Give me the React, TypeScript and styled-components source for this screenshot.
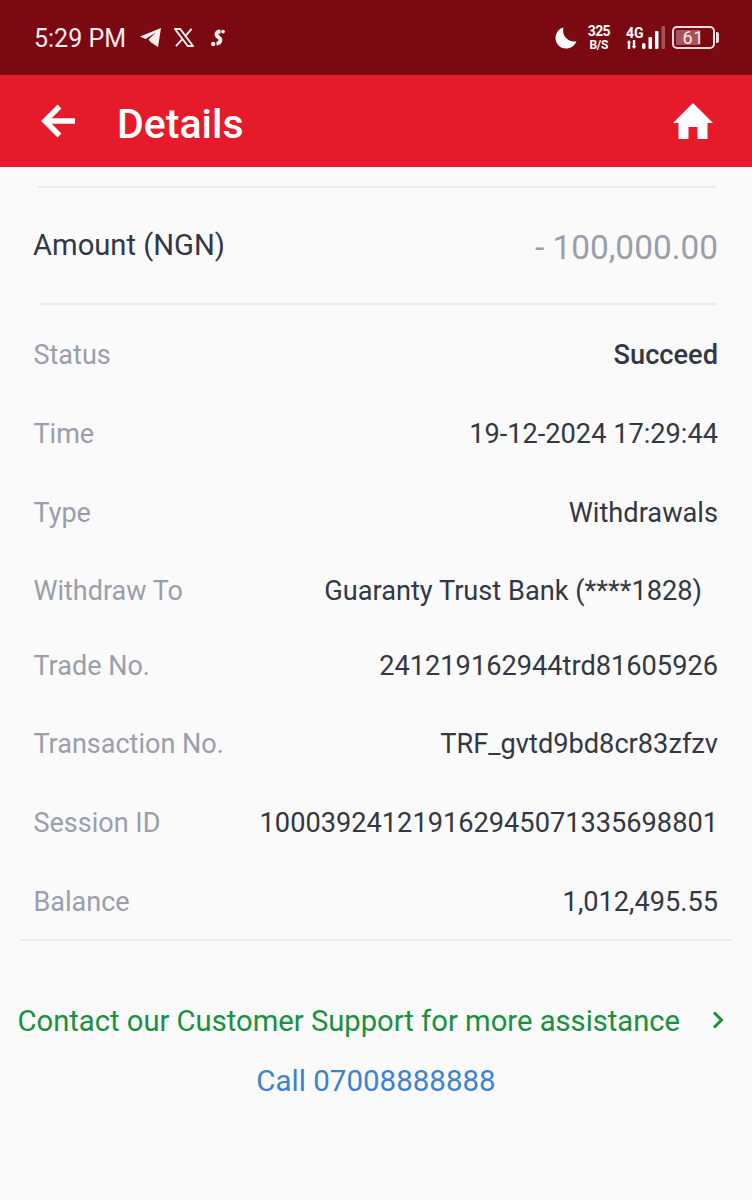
import React from "react";
import styled, { createGlobalStyle } from "styled-components";

const GlobalStyle = createGlobalStyle`
  html, body {
    margin: 0;
    padding: 0;
    background: #fafafb;
    font-family: Roboto, "Liberation Sans", sans-serif;
  }
`;

const Page = styled.div`
  width: 752px;
  height: 1200px;
  overflow: hidden;
  background: #fafafb;
  display: flex;
  flex-direction: column;
`;

const StatusBar = styled.div`
  height: 75px;
  background: #7a0911;
  color: #f7eeee;
  display: flex;
  align-items: center;
  justify-content: space-between;
  padding: 0 33px 0 34px;
  box-sizing: border-box;
`;

const StatusGroup = styled.div`
  display: flex;
  align-items: center;
`;

const Clock = styled.span`
  font-size: 25px;
  margin: 2px 14px 0 0;
`;

const Speed = styled.div`
  display: flex;
  flex-direction: column;
  align-items: center;
  font-size: 14px;
  font-weight: 700;
  line-height: 14px;
  letter-spacing: -0.6px;
  margin: 0 16px 0 11px;
  color: #fff;
`;

const SpeedUnit = styled.span`
  font-size: 12px;
  font-weight: 700;
  letter-spacing: -0.2px;
`;

const Network = styled.div`
  display: flex;
  flex-direction: column;
  width: 16px;
  font-size: 14px;
  font-weight: 700;
  line-height: 14px;
  color: #fff;
`;

const Battery = styled.div`
  position: relative;
  width: 43px;
  height: 23px;
  margin-left: 7px;
  box-sizing: border-box;
  border: 2px solid #f0dcdc;
  border-radius: 5px;
  display: flex;
  align-items: center;
  justify-content: center;
  color: #f7eeee;
  font-size: 18px;
  padding: 2px;
`;

const BatteryFill = styled.div`
  position: absolute;
  left: 2px;
  top: 2px;
  bottom: 2px;
  background: #a8525a;
  border-radius: 1px;
`;

const BatteryLevel = styled.span`
  position: relative;
  letter-spacing: 1px;
`;

const BatteryCap = styled.div`
  width: 3px;
  height: 11px;
  margin-left: 1px;
  background: #f0dcdc;
  border-radius: 0 2px 2px 0;
`;

const Header = styled.header`
  height: 92px;
  background: #e51a2a;
  color: #fff;
  display: flex;
  align-items: center;
  padding: 0 39px 0 41px;
  box-sizing: border-box;
`;

const Title = styled.h1`
  margin: 5px auto 0 40px;
  font-size: 41px;
  font-weight: 500;
`;

const Divider = styled.div<{ $left: number; $right: number }>`
  height: 2px;
  margin: 0 ${(p) => p.$right}px 0 ${(p) => p.$left}px;
  background: #e9e9f2;
`;

const Body = styled.main`
  padding-top: 19px;
`;

const AmountRow = styled.div`
  height: 115px;
  display: flex;
  align-items: center;
  justify-content: space-between;
  padding: 0 34px;
`;

const AmountLabel = styled.span`
  font-size: 29.2px;
  color: #333743;
  margin: 0 0 2px -1px;
`;

const AmountValue = styled.span`
  font-size: 33.4px;
  color: #9a9eab;
  margin-top: 4px;
`;

const Rows = styled.div`
  padding: 34px 34px 0 33.5px;
  height: 634px;
  box-sizing: border-box;
`;

const Row = styled.div<{ $height: number }>`
  height: ${(p) => p.$height}px;
  display: flex;
  align-items: flex-start;
  justify-content: space-between;
  line-height: 32px;
`;

const Label = styled.span`
  color: #9a9eab;
  font-size: 27px;
`;

const Value = styled.span<{ $bold?: boolean; $shift?: number }>`
  color: #333743;
  font-size: 27.2px;
  font-weight: ${(p) => (p.$bold ? 500 : 400)};
  margin-right: ${(p) => p.$shift ?? 0}px;
`;

const Support = styled.div`
  display: flex;
  align-items: center;
  justify-content: space-between;
  padding: 63px 28px 0 17.5px;
  color: #17903f;
  font-size: 29.2px;
`;

const CallLink = styled.div`
  margin-top: 26px;
  text-align: center;
  color: #3b82d0;
  font-size: 29.5px;
`;

type RowData = { label: string; value: string; height: number; bold?: boolean; shift?: number };

const rows: RowData[] = [
  { label: "Status", value: "Succeed", height: 79, bold: true },
  { label: "Time", value: "19-12-2024 17:29:44", height: 79 },
  { label: "Type", value: "Withdrawals", height: 78 },
  { label: "Withdraw To", value: "Guaranty Trust Bank (****1828)", height: 75, shift: 16 },
  { label: "Trade No.", value: "241219162944trd81605926", height: 78 },
  { label: "Transaction No.", value: "TRF_gvtd9bd8cr83zfzv", height: 79 },
  { label: "Session ID", value: "100039241219162945071335698801", height: 79 },
  { label: "Balance", value: "1,012,495.55", height: 40 },
];

const TelegramIcon = () => (
  <svg width="21" height="19" viewBox="0 0 21 19" fill="currentColor">
    <path d="M0 8.5 L21 0 L18 19 L11 14.5 L8.5 11.5 L16 4.5 L5.5 11 Z" />
  </svg>
);

const XIcon = () => (
  <svg width="20" height="19" viewBox="0 0 21 20" style={{ marginLeft: 13 }}>
    <path d="M1 1 H6.5 L20 19 H14.5 Z" fill="none" stroke="currentColor" strokeWidth="2" />
    <path d="M18.5 1 L11.5 9 M9 11.5 L2 19" stroke="currentColor" strokeWidth="2" />
  </svg>
);

const SIcon = () => (
  <svg width="14" height="18" viewBox="0 0 14 18" style={{ marginLeft: 17 }}>
    <path d="M9.5 2.5 C6.5 2.5 5 4 5.5 6 C6 8 9.5 8.5 9.5 11 C9.5 13 8 14.5 5.5 14.5" fill="none" stroke="currentColor" strokeWidth="3.8" />
    <circle cx="12" cy="2.6" r="1.9" fill="currentColor" />
    <circle cx="2.2" cy="15" r="2.2" fill="currentColor" />
  </svg>
);

const MoonIcon = () => (
  <svg width="22" height="22" viewBox="0 0 22 22" fill="#fff">
    <path d="M8.5 0.5 C6.5 7.5 11.5 15.5 21.5 14.5 C19.5 19 15.5 21.5 11 21.5 C5 21.5 0.5 16.5 0.5 11 C0.5 6 4 1.5 8.5 0.5 Z" />
  </svg>
);

const Signal = () => (
  <svg width="23" height="23" viewBox="0 0 23 23">
    <rect x="0" y="17" width="3.5" height="6" rx="1.5" fill="#fff" />
    <rect x="6.5" y="11" width="3.5" height="12" rx="1" fill="#fff" />
    <rect x="13" y="5" width="3.5" height="18" rx="1" fill="#fff" />
    <rect x="19.5" y="0" width="3.5" height="23" rx="1" fill="#a65058" />
  </svg>
);

const Arrows = () => (
  <svg width="11" height="9" viewBox="0 0 11 9" fill="#fff">
    <path d="M3 0 L5.2 3 H4.2 V9 H1.8 V3 H0.8 Z" />
    <path d="M8 9 L10.4 6 H9.2 V0 H6.8 V6 H5.6 Z" />
  </svg>
);

const BackArrow = () => (
  <svg width="36" height="34" viewBox="0 0 36 34" fill="none" stroke="#fff" strokeWidth="5.5">
    <path d="M34 17 H5" />
    <path d="M18.5 2.5 L4 17 L18.5 31.5" />
  </svg>
);

const HomeIcon = () => (
  <svg width="40" height="36" viewBox="0 0 40 36" fill="#fff">
    <path d="M20 0 L40 20 H34.5 V36 H24.5 V24 H15.5 V36 H5.5 V20 H0 Z" />
  </svg>
);

const Chevron = () => (
  <svg width="13" height="20" viewBox="0 0 13 20" fill="none" stroke="#17903f" strokeWidth="3" style={{ marginBottom: 3 }}>
    <path d="M3 2.5 L10.5 10 L3 17.5" />
  </svg>
);

const App = () => {
  return (
    <Page>
      <GlobalStyle />
      <StatusBar>
        <StatusGroup>
          <Clock>5:29 PM</Clock>
          <TelegramIcon />
          <XIcon />
          <SIcon />
        </StatusGroup>
        <StatusGroup>
          <MoonIcon />
          <Speed>
            325
            <SpeedUnit>B/S</SpeedUnit>
          </Speed>
          <Network>
            4G
            <Arrows />
          </Network>
          <Signal />
          <Battery>
            <BatteryFill style={{ width: "61%" }} />
            <BatteryLevel>61</BatteryLevel>
          </Battery>
          <BatteryCap />
        </StatusGroup>
      </StatusBar>
      <Header>
        <BackArrow />
        <Title>Details</Title>
        <HomeIcon />
      </Header>
      <Body>
        <Divider $left={38} $right={36} />
        <AmountRow>
          <AmountLabel>Amount (NGN)</AmountLabel>
          <AmountValue>- 100,000.00</AmountValue>
        </AmountRow>
        <Divider $left={38} $right={36} />
        <Rows>
          {rows.map((item, i) => (
            <Row key={i} $height={item.height}>
              <Label>{item.label}</Label>
              <Value $bold={item.bold} $shift={item.shift}>
                {item.value}
              </Value>
            </Row>
          ))}
        </Rows>
        <Divider $left={21} $right={21} />
        <Support>
          Contact our Customer Support for more assistance
          <Chevron />
        </Support>
        <CallLink>Call 07008888888</CallLink>
      </Body>
    </Page>
  );
};

export default App;
